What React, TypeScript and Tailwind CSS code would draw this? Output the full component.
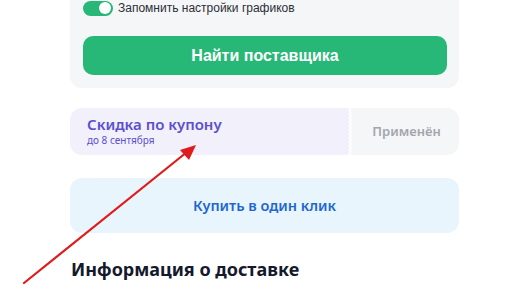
import React from "react";

export default function App() {
  return (
    <div className="relative w-[514px] h-[304px] overflow-hidden bg-white">
      <div className="ml-[70px] w-[389px] flex flex-col">
        {/* top panel */}
        <div className="bg-[#f5f6f8] rounded-b-[12px] pl-[13px] pr-[12px] pb-[13px] flex flex-col">
          <div className="flex items-center h-[16px] gap-[5px]">
            <div className="w-[30px] h-[15px] rounded-full bg-[#27b877] relative flex items-center justify-end pr-[2px]">
              <div className="w-[12px] h-[12px] rounded-full bg-white" />
            </div>
            <span className="text-[12px] text-[#2b2f36] leading-none" style={{ fontFamily: '"Liberation Sans", Arial, sans-serif' }}>
              Запомнить настройки графиков
            </span>
          </div>
          <button className="mt-[20px] h-[39px] w-full rounded-[10px] bg-[#27b877] text-white text-[16px] font-bold flex items-center justify-center" style={{ fontFamily: '"Liberation Sans", Arial, sans-serif' }}>
            Найти поставщика
          </button>
        </div>

        {/* coupon */}
        <div className="mt-[20px] h-[47px] flex rounded-[12px] overflow-hidden" style={{ fontFamily: '"Noto Sans", sans-serif' }}>
          <div className="flex-1 bg-[#f1f0fb] flex flex-col justify-center pl-[17px]">
            <span className="text-[15px] font-semibold text-[#5b4fcf] leading-[17px]">Скидка по купону</span>
            <span className="text-[10px] text-[#5b4fcf] leading-[13px] mt-[1px]">до 8 сентября</span>
          </div>
          <svg width="6" height="47" viewBox="0 0 6 47" className="block shrink-0">
            <rect x="0" y="0" width="6" height="47" fill="#f5f6f8" />
            <polygon
              points="0,0 3,0 1,2 3,4 1,6 3,8 1,10 3,12 1,14 3,16 1,18 3,20 1,22 3,24 1,26 3,28 1,30 3,32 1,34 3,36 1,38 3,40 1,42 3,44 1,46 3,47 0,47"
              fill="#f1f0fb"
            />
            <polyline
              points="3,0 1,2 3,4 1,6 3,8 1,10 3,12 1,14 3,16 1,18 3,20 1,22 3,24 1,26 3,28 1,30 3,32 1,34 3,36 1,38 3,40 1,42 3,44 1,46 3,47"
              fill="none"
              stroke="#ffffff"
              strokeWidth="1.5"
            />
          </svg>
          <div className="w-[105px] bg-[#f5f6f8] flex items-center justify-center">
            <span className="text-[13px] font-semibold text-[#a3a6ad]">Применён</span>
          </div>
        </div>

        {/* buy */}
        <button className="mt-[23px] h-[55px] w-full rounded-[12px] bg-[#e9f5fd] flex items-center justify-center" style={{ fontFamily: '"Noto Sans", sans-serif' }}>
          <span className="text-[14.5px] font-semibold text-[#2166d1]">Купить в один клик</span>
        </button>

        <h2 className="mt-[23px] ml-[1px] text-[18px] font-bold text-[#141a2c] leading-[26px]" style={{ fontFamily: '"Noto Sans", sans-serif' }}>
          Информация о доставке
        </h2>
      </div>

      {/* red arrow annotation */}
      <svg className="absolute left-0 top-0 pointer-events-none" width="514" height="304" viewBox="0 0 514 304">
        <line x1="24" y1="283" x2="187" y2="152" stroke="#e01b1b" strokeWidth="2.2" strokeLinecap="round" />
        <polygon points="196,145 180,150 189,160" fill="#e01b1b" />
      </svg>
    </div>
  );
}
